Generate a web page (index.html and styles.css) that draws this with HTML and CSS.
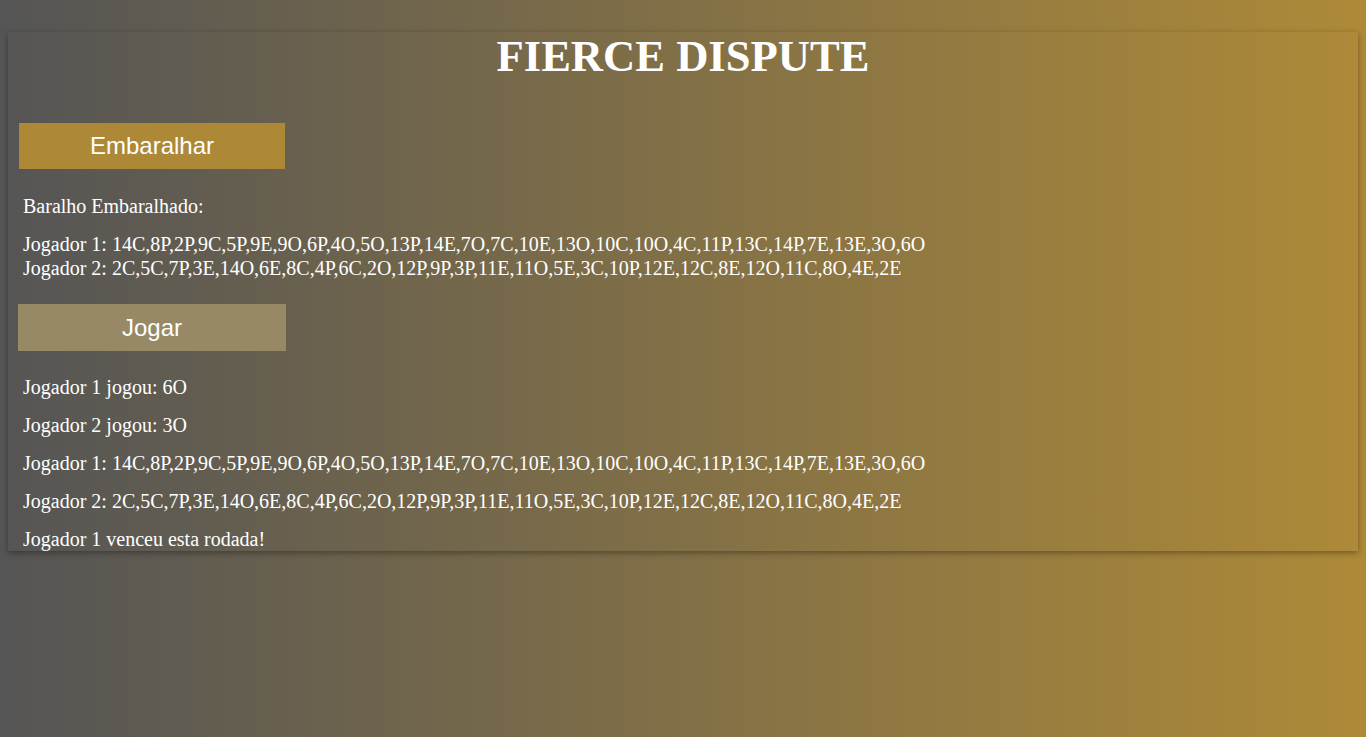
FILE: index.html
```html
<!DOCTYPE html>
<html>
<head>
<meta charset="utf-8">
<link rel="stylesheet" href="styles.css">
</head>
<body>
<div class="game">
  <h1 class="title">FIERCE DISPUTE</h1>
  <button class="btn btn-shuffle">Embaralhar</button>
  <p class="line first">Baralho Embaralhado:</p>
  <div class="hands">
    <div class="hand">Jogador 1: 14C,8P,2P,9C,5P,9E,9O,6P,4O,5O,13P,14E,7O,7C,10E,13O,10C,10O,4C,11P,13C,14P,7E,13E,3O,6O</div>
    <div class="hand">Jogador 2: 2C,5C,7P,3E,14O,6E,8C,4P,6C,2O,12P,9P,3P,11E,11O,5E,3C,10P,12E,12C,8E,12O,11C,8O,4E,2E</div>
  </div>
  <button class="btn btn-play">Jogar</button>
  <p class="line">Jogador 1 jogou: 6O</p>
  <p class="line">Jogador 2 jogou: 3O</p>
  <p class="line">Jogador 1: 14C,8P,2P,9C,5P,9E,9O,6P,4O,5O,13P,14E,7O,7C,10E,13O,10C,10O,4C,11P,13C,14P,7E,13E,3O,6O</p>
  <p class="line">Jogador 2: 2C,5C,7P,3E,14O,6E,8C,4P,6C,2O,12P,9P,3P,11E,11O,5E,3C,10P,12E,12C,8E,12O,11C,8O,4E,2E</p>
  <p class="line last">Jogador 1 venceu esta rodada!</p>
</div>
</body>
</html>
```
FILE: styles.css
```css
html {
  min-height: 100%;
  background: linear-gradient(to right, #555555, #ae8a38);
}
body {
  margin: 0;
  padding: 32px 8px 0;
  min-height: 737px;
  box-sizing: border-box;
  font-family: "Liberation Serif", "Times New Roman", serif;
  color: #ffffff;
}
.game {
  box-shadow: 0 2px 6px rgba(0, 0, 0, 0.35);
  padding: 1px 0 0 15px;
}
.title {
  font-size: 44.6px;
  font-weight: bold;
  text-align: center;
  margin: 0 0 44px -15px;
  line-height: 46px;
}
.btn {
  display: block;
  width: 266px;
  height: 46px;
  margin-left: -4px;
  border: none;
  font-family: "Liberation Sans", Arial, sans-serif;
  font-size: 24px;
  color: #ffffff;
}
.btn-shuffle {
  background: #ad8837;
}
.btn-play {
  background: #978966;
  margin-top: 24px;
  margin-left: -5px;
  width: 268px;
  height: 47px;
}
.line {
  font-size: 20px;
  margin: 15px 0;
  line-height: 23px;
}
.line.first {
  margin: 26px 0 14px;
}
.btn-play + .line {
  margin-top: 25px;
}
.line.last {
  margin-bottom: 0;
}
.hands {
  font-size: 20px;
  line-height: 24px;
}
```
